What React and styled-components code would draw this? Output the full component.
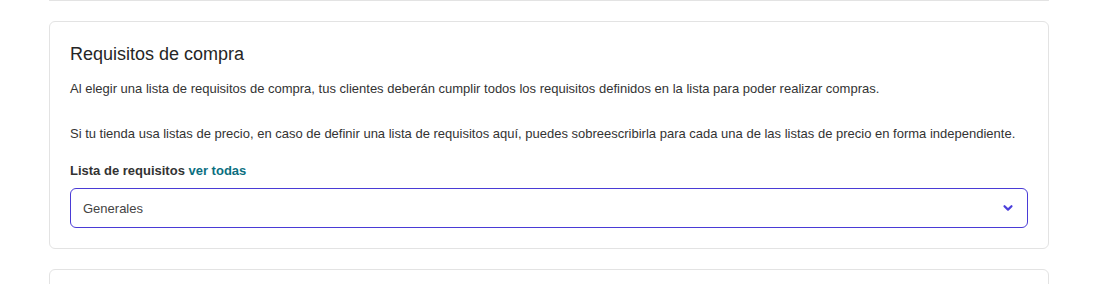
import React, { useState } from "react";
import styled, { createGlobalStyle } from "styled-components";

const GlobalStyle = createGlobalStyle`
  body {
    margin: 0;
    background: #ffffff;
    font-family: "Liberation Sans", Arial, sans-serif;
    color: #333333;
  }
`;

const Page = styled.div`
  display: flex;
  flex-direction: column;
  gap: 20px;
  width: 1000px;
  margin-left: 49px;
`;

const Card = styled.section`
  box-sizing: border-box;
  border: 1px solid #e3e3e3;
  border-radius: ${(p) => (p.$stub ? "0 0 6px 6px" : "6px")};
  border-top-width: ${(p) => (p.$stub ? "0" : "1px")};
  padding: ${(p) => (p.$stub ? "0" : "20px")};
  background: #ffffff;
`;

const Title = styled.h2`
  margin: 0;
  font-size: 18px;
  line-height: 24px;
  font-weight: 400;
  color: #262626;
`;

const Paragraph = styled.p`
  margin: ${(p) => p.$top}px 0 0;
  font-size: 13px;
  line-height: 20px;
  color: #333333;
`;

const Label = styled.div`
  margin-top: 17px;
  font-size: 13px;
  line-height: 20px;
  font-weight: 700;
  color: #333333;
`;

const LinkText = styled.a`
  color: #0b6f7f;
  text-decoration: none;
  cursor: pointer;
`;

const SelectBox = styled.button`
  box-sizing: border-box;
  margin-top: 7px;
  width: 100%;
  height: 40px;
  display: flex;
  align-items: center;
  justify-content: space-between;
  padding: 0 13px 0 12px;
  border: 1px solid #4a3bd6;
  border-radius: 6px;
  background: #ffffff;
  font-family: inherit;
  font-size: 13px;
  color: #444444;
  cursor: pointer;
`;

const Chevron = () => (
  <svg width="12" height="12" viewBox="0 0 12 12" aria-hidden="true">
    <path
      d="M2.5 4.2 L6 7.6 L9.5 4.2"
      fill="none"
      stroke="#4b3fdb"
      strokeWidth="2.2"
      strokeLinecap="round"
      strokeLinejoin="round"
    />
  </svg>
);

const App = () => {
  const [value] = useState("Generales");
  return (
    <>
      <GlobalStyle />
      <Page>
        <Card $stub />
        <Card>
          <Title>Requisitos de compra</Title>
          <Paragraph $top={13}>
            Al elegir una lista de requisitos de compra, tus clientes deberán
            cumplir todos los requisitos definidos en la lista para poder
            realizar compras.
          </Paragraph>
          <Paragraph $top={25}>
            Si tu tienda usa listas de precio, en caso de definir una lista de
            requisitos aquí, puedes sobreescribirla para cada una de las listas
            de precio en forma independiente.
          </Paragraph>
          <Label>
            Lista de requisitos <LinkText>ver todas</LinkText>
          </Label>
          <SelectBox type="button">
            <span>{value}</span>
            <Chevron />
          </SelectBox>
        </Card>
        <Card>
          <Title>&nbsp;</Title>
        </Card>
      </Page>
    </>
  );
};

export default App;
